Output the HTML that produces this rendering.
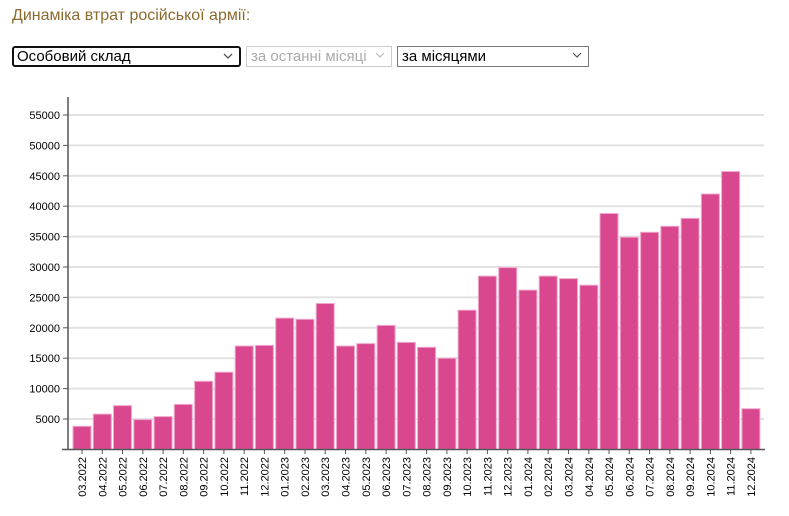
<!DOCTYPE html>
<html><head><meta charset="utf-8">
<style>
html,body{margin:0;padding:0;background:#fff;width:789px;height:516px;overflow:hidden;font-family:"Liberation Sans",Arial,sans-serif}
.title{position:absolute;left:12px;top:7px;font-size:16px;color:#8b6a2e}
.sel{position:absolute;top:46px;height:21px;box-sizing:border-box;font-size:15px;line-height:19px;padding-left:4px;background:#fff}
.sel .ar{position:absolute;right:6px;top:3px;width:10px;height:10px}
#s1{left:12px;width:229px;border:2px solid #111;border-radius:3px;line-height:17px;padding-left:3px;color:#000}
#s2{left:246px;width:146px;border:1px solid #ccc;color:#aaa}
#s3{left:397px;width:192px;border:1px solid #777;color:#000}
svg{position:absolute;left:0;top:0}
</style></head><body>
<div class="title">Динаміка втрат російської армії:</div>
<div class="sel" id="s1">Особовий склад<svg class="ar" style="left:auto;top:3px" viewBox="0 0 10 10"><path d="M1 3 L5 7 L9 3" fill="none" stroke="#555" stroke-width="1.3"/></svg></div>
<div class="sel" id="s2">за останні місяці<svg class="ar" style="left:auto" viewBox="0 0 10 10"><path d="M1 3 L5 7 L9 3" fill="none" stroke="#bbb" stroke-width="1.2"/></svg></div>
<div class="sel" id="s3">за місяцями<svg class="ar" style="left:auto" viewBox="0 0 10 10"><path d="M1 3 L5 7 L9 3" fill="none" stroke="#555" stroke-width="1.2"/></svg></div>
<svg id="c" width="789" height="516" xmlns="http://www.w3.org/2000/svg"></svg>
<script>
var vals=[3800,5800,7200,4900,5400,7400,11200,12700,17000,17100,21600,21400,24000,17000,17400,20400,17600,16800,15000,22900,28500,29900,26200,28500,28100,27000,38800,34900,35700,36700,38000,42000,45700,6700];
var labs=[];var m=3,y=2022;for(var i=0;i<34;i++){labs.push((m<10?'0':'')+m+'.'+y);m++;if(m>12){m=1;y++;}}
var s='';var y0=449.4,k=30.4/5000;
for(var v=5000;v<=55000;v+=5000){var yy=(y0-v*k).toFixed(1);
s+='<line x1="68" x2="764" y1="'+yy+'" y2="'+yy+'" stroke="#e2e2e2" stroke-width="2"/>';
s+='<line x1="63" x2="68" y1="'+yy+'" y2="'+yy+'" stroke="#555"/>';
s+='<text x="60" y="'+(+yy+4)+'" font-size="11" text-anchor="end" fill="#000" font-family="Liberation Sans,Arial,sans-serif">'+v+'</text>';}
for(var i=0;i<34;i++){var cx=82+i*20.27;var h=vals[i]*k;
s+='<rect x="'+(cx-9).toFixed(1)+'" y="'+(y0-h).toFixed(1)+'" width="18" height="'+h.toFixed(1)+'" fill="#d9488f" stroke="#f0a8cc" stroke-width="1"/>';
s+='<line x1="'+cx.toFixed(1)+'" x2="'+cx.toFixed(1)+'" y1="449" y2="454" stroke="#555"/>';
s+='<text transform="translate('+(cx+4).toFixed(1)+',457) rotate(-90)" font-size="11" text-anchor="end" fill="#000" font-family="Liberation Sans,Arial,sans-serif">'+labs[i]+'</text>';}
s+='<line x1="68" x2="68" y1="97" y2="449.5" stroke="#555" stroke-width="1.5"/>';
s+='<line x1="62" x2="765" y1="449.5" y2="449.5" stroke="#555" stroke-width="1.5"/>';
document.getElementById('c').innerHTML=s;
</script>
</body></html>
